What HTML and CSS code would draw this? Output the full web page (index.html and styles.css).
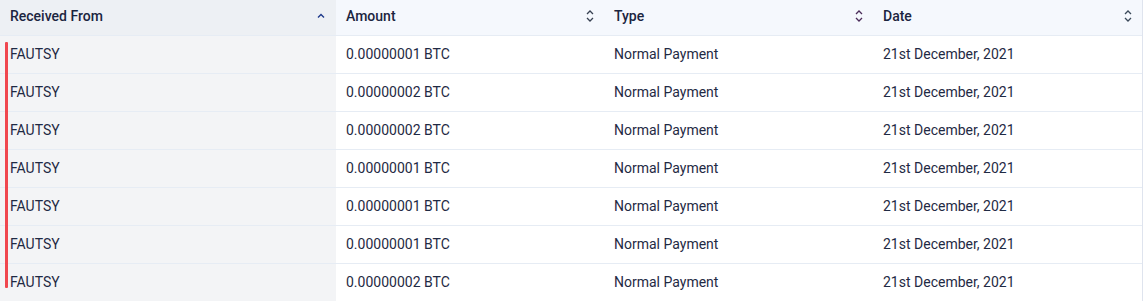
FILE: index.html
```html
<!DOCTYPE html>
<html>
<head>
<meta charset="utf-8">
<link rel="stylesheet" href="styles.css">
</head>
<body>
<div class="table">
  <div class="row head">
    <div class="cell first">Received From
      <svg class="sort" width="10" height="10" viewBox="0 0 10 10"><path d="M2 6.5 L5 3.5 L8 6.5" fill="none" stroke="#1e3a8a" stroke-width="1.4"/></svg>
    </div>
    <div class="cell">Amount
      <svg class="sort" width="10" height="14" viewBox="0 0 10 14"><path d="M2 5 L5 2 L8 5 M2 9 L5 12 L8 9" fill="none" stroke="#374151" stroke-width="1.3"/></svg>
    </div>
    <div class="cell">Type
      <svg class="sort" width="10" height="14" viewBox="0 0 10 14"><path d="M2 5 L5 2 L8 5 M2 9 L5 12 L8 9" fill="none" stroke="#4b2d5a" stroke-width="1.3"/></svg>
    </div>
    <div class="cell">Date
      <svg class="sort" width="10" height="14" viewBox="0 0 10 14"><path d="M2 5 L5 2 L8 5 M2 9 L5 12 L8 9" fill="none" stroke="#3b4a5a" stroke-width="1.3"/></svg>
    </div>
  </div>
  <div class="body">
    <div class="indicator"></div>
    <div class="row"><div class="cell first">FAUTSY</div><div class="cell">0.00000001 BTC</div><div class="cell">Normal Payment</div><div class="cell">21st December, 2021</div></div>
    <div class="row"><div class="cell first">FAUTSY</div><div class="cell">0.00000002 BTC</div><div class="cell">Normal Payment</div><div class="cell">21st December, 2021</div></div>
    <div class="row"><div class="cell first">FAUTSY</div><div class="cell">0.00000002 BTC</div><div class="cell">Normal Payment</div><div class="cell">21st December, 2021</div></div>
    <div class="row"><div class="cell first">FAUTSY</div><div class="cell">0.00000001 BTC</div><div class="cell">Normal Payment</div><div class="cell">21st December, 2021</div></div>
    <div class="row"><div class="cell first">FAUTSY</div><div class="cell">0.00000001 BTC</div><div class="cell">Normal Payment</div><div class="cell">21st December, 2021</div></div>
    <div class="row"><div class="cell first">FAUTSY</div><div class="cell">0.00000001 BTC</div><div class="cell">Normal Payment</div><div class="cell">21st December, 2021</div></div>
    <div class="row"><div class="cell first">FAUTSY</div><div class="cell">0.00000002 BTC</div><div class="cell">Normal Payment</div><div class="cell">21st December, 2021</div></div>
  </div>
</div>
</body>
</html>
```
FILE: styles.css
```css
html, body {
  margin: 0;
  padding: 0;
  background: #ffffff;
}
body {
  font-family: Roboto, "Liberation Sans", sans-serif;
  font-size: 14px;
  color: #1f2a44;
}
.table {
  width: 1142px;
  border-right: 1px solid #dfe4ee;
}
.row {
  display: grid;
  grid-template-columns: 336px 268px 269px 269px;
  height: 38px;
  border-bottom: 1px solid #e6ecf4;
  box-sizing: border-box;
}
.head {
  height: 36px;
  background: #f5f8fd;
  font-weight: 500;
  color: #1b2540;
}
.cell {
  display: flex;
  align-items: center;
  justify-content: space-between;
  padding: 0 9px 0 10px;
  box-sizing: border-box;
}
.head .cell {
  padding-bottom: 4px;
}
.head .first {
  padding-right: 10px;
}
.body .cell {
  padding-bottom: 1px;
}
.first {
  background: #f3f4f6;
}
.head .first {
  background: #edf0f4;
}
.sort {
  display: block;
}
.body {
  position: relative;
}
.indicator {
  position: absolute;
  left: 5px;
  top: 6px;
  width: 3px;
  height: 246px;
  background: #f0474f;
  border-radius: 1px;
}
```
